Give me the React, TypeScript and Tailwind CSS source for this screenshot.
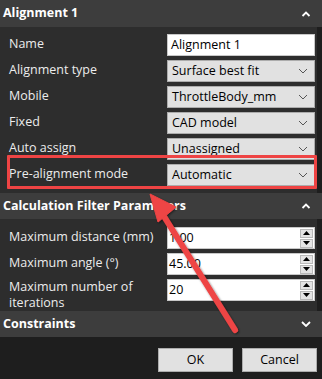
import { ReactNode } from "react";

function ChevronUp() {
  return (
    <svg width="10" height="6" viewBox="0 0 10 6" className="text-white">
      <path d="M1.5 5 L5 1.5 L8.5 5" fill="none" stroke="currentColor" strokeWidth="1.8" />
    </svg>
  );
}

function ChevronDown({ thin = false }: { thin?: boolean }) {
  return (
    <svg width="10" height="6" viewBox="0 0 10 6">
      <path
        d="M1 1 L5 5 L9 1"
        fill="none"
        stroke={thin ? "#555" : "#fff"}
        strokeWidth={thin ? 1 : 1.8}
      />
    </svg>
  );
}

function SectionHeader({ title, open = true }: { title: string; open?: boolean }) {
  return (
    <div className="flex items-center justify-between h-[26px] bg-[#3d3d3d] pl-[3px] pr-[11px]">
      <span className="font-bold text-white text-[12.5px]">{title}</span>
      {open ? <ChevronUp /> : <ChevronDown />}
    </div>
  );
}

function Row({ label, children, tall = false }: { label: ReactNode; children: ReactNode; tall?: boolean }) {
  return (
    <div className={`grid grid-cols-[167px_148px] items-start ${tall ? "h-[33px]" : "h-[26px]"}`}>
      <span
        className={`text-[12.5px] text-[#ececec] pl-[9px] whitespace-nowrap ${
          tall ? "leading-[16px] pt-0" : "leading-[15px] pt-[2px]"
        }`}
      >
        {label}
      </span>
      {children}
    </div>
  );
}

function TextBox({ value }: { value: string }) {
  return (
    <div className="h-[22px] bg-white border border-[#c8c8c8] flex items-center px-[3px] text-[12.5px] text-black">
      {value}
    </div>
  );
}

function Select({ value }: { value: string }) {
  return (
    <div className="h-[22px] bg-[#e1e1e1] border border-[#acacac] flex items-center justify-between pl-[4px] pr-[6px] text-[12.5px] text-black">
      <span>{value}</span>
      <ChevronDown thin />
    </div>
  );
}

function Spin({ value }: { value: string }) {
  return (
    <div className="h-[22px] bg-white border border-[#c8c8c8] flex items-center justify-between pl-[1px] pr-[1px] text-[12.5px] text-black">
      <span>{value}</span>
      <div className="flex flex-col gap-[1px]">
        {[0, 1].map((i) => (
          <div key={i} className="w-[13px] h-[9px] bg-[#e4e4e4] border border-[#b9b9b9] flex items-center justify-center">
            <svg width="7" height="4" viewBox="0 0 7 4">
              <path d={i === 0 ? "M0 4 L3.5 0 L7 4 Z" : "M0 0 L3.5 4 L7 0 Z"} fill="#000" />
            </svg>
          </div>
        ))}
      </div>
    </div>
  );
}

export default function App() {
  return (
    <div
      className="relative w-[322px] h-[379px] bg-[#1e1e1e] overflow-hidden"
      style={{ fontFamily: '"Open Sans", "Noto Sans", sans-serif' }}
    >
      <div className="h-[27px] flex items-center justify-between bg-[#3d3d3d] pl-[3px] pr-[11px]">
        <span className="font-bold text-white text-[12.5px]">Alignment 1</span>
        <ChevronUp />
      </div>

      <div className="bg-[#2d2d2d] mr-[5px] pt-[7px] pb-[3px]">
        <Row label="Name">
          <TextBox value="Alignment 1" />
        </Row>
        <Row label="Alignment type">
          <Select value="Surface best fit" />
        </Row>
        <Row label="Mobile">
          <Select value="ThrottleBody_mm" />
        </Row>
        <Row label="Fixed">
          <Select value="CAD model" />
        </Row>
        <Row label="Auto assign">
          <Select value="Unassigned" />
        </Row>
        <Row label="Pre-alignment mode">
          <Select value="Automatic" />
        </Row>
      </div>

      <SectionHeader title="Calculation Filter Parameters" />

      <div className="bg-[#2d2d2d] mr-[5px] pt-[8px] h-[92px]">
        <Row label="Maximum distance (mm)">
          <Spin value="1.00" />
        </Row>
        <Row label="Maximum angle (°)">
          <Spin value="45.00" />
        </Row>
        <Row label={<>Maximum number of<br />iterations</>} tall>
          <Spin value="20" />
        </Row>
      </div>

      <SectionHeader title="Constraints" open={false} />

      <div className="flex justify-end gap-[9px] pt-[11px] pr-[5px]">
        <button className="w-[75px] h-[24px] bg-[#e1e1e1] border border-[#adadad] text-[12.5px] text-black">OK</button>
        <button className="w-[75px] h-[24px] bg-[#e1e1e1] border border-[#adadad] text-[12.5px] text-black">Cancel</button>
      </div>

      {/* annotation: highlight box */}
      <div className="absolute left-[7px] top-[155px] w-[310px] h-[34px] border-[3px] border-[#ee4444] rounded-[1px] pointer-events-none" />

      {/* annotation: arrow */}
      <svg className="absolute left-0 top-0 pointer-events-none" width="322" height="379" viewBox="0 0 322 379">
        <defs>
          <filter id="sh" x="-20%" y="-20%" width="140%" height="140%">
            <feDropShadow dx="1" dy="1" stdDeviation="1" floodColor="#000" floodOpacity="0.5" />
          </filter>
        </defs>
        <g filter="url(#sh)" fill="#ee4444" stroke="#ee4444">
          <line x1="235" y1="330" x2="160" y2="210" strokeWidth="6" strokeLinecap="round" />
          <polygon points="150,194 176,207 158,222" strokeWidth="1" strokeLinejoin="round" />
        </g>
      </svg>
    </div>
  );
}
